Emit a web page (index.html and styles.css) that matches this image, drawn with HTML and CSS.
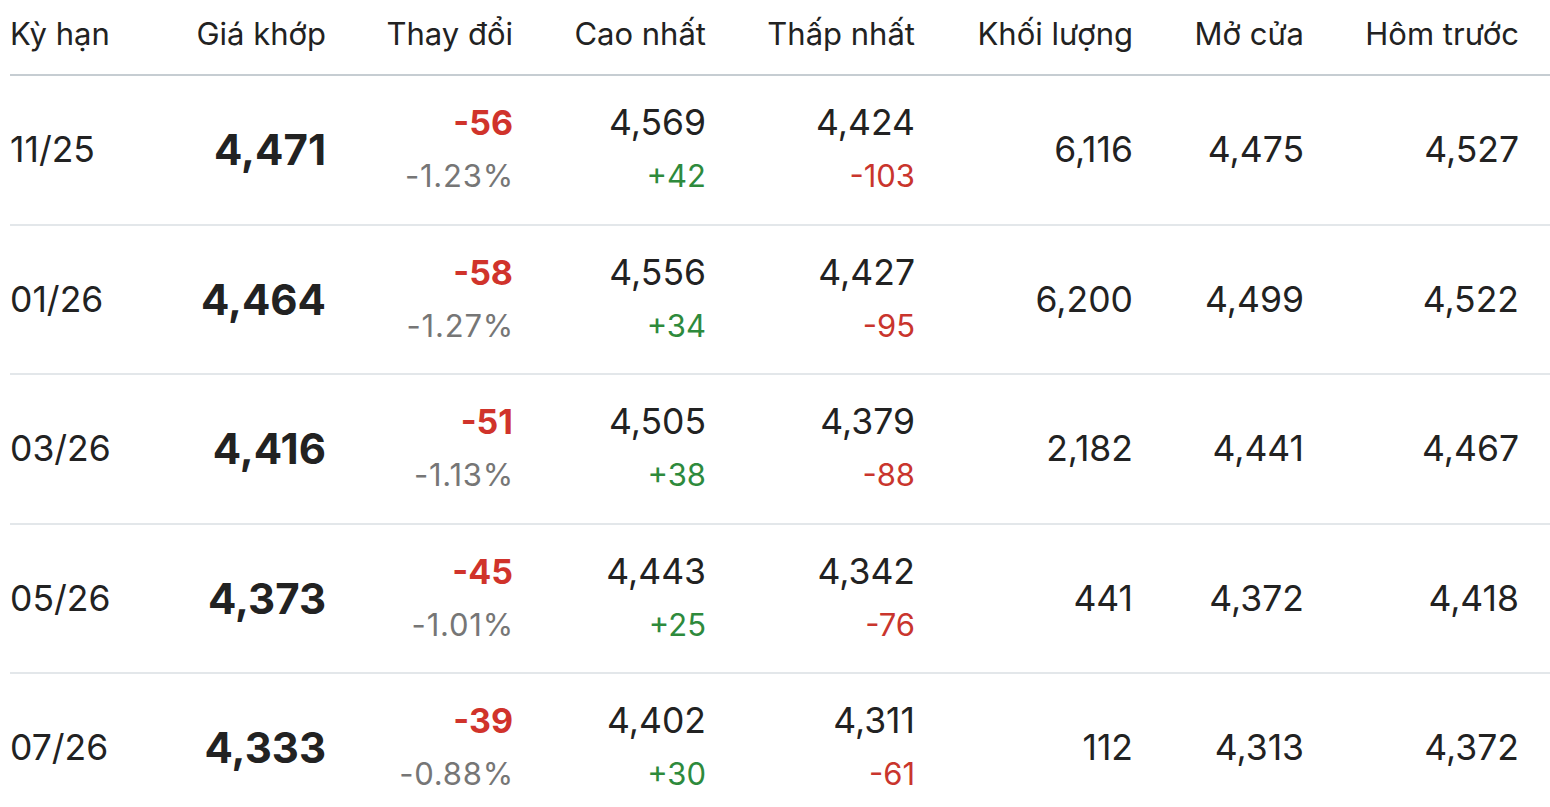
FILE: index.html
```html
<!DOCTYPE html>
<html lang="vi">
<head>
<meta charset="utf-8">
<title>Bảng giá</title>
<link rel="stylesheet" href="styles.css">
</head>
<body>
<div class="table">
  <div class="row head">
    <div class="cell left">Kỳ hạn</div>
    <div class="cell">Giá khớp</div>
    <div class="cell">Thay đổi</div>
    <div class="cell">Cao nhất</div>
    <div class="cell">Thấp nhất</div>
    <div class="cell">Khối lượng</div>
    <div class="cell">Mở cửa</div>
    <div class="cell">Hôm trước</div>
  </div>

  <div class="row">
    <div class="cell left val">11/25</div>
    <div class="cell price">4,471</div>
    <div class="cell stack"><span class="chg down">-56</span><span class="pct">-1.23%</span></div>
    <div class="cell stack"><span class="val">4,569</span><span class="sub up">+42</span></div>
    <div class="cell stack"><span class="val">4,424</span><span class="sub down2">-103</span></div>
    <div class="cell val">6,116</div>
    <div class="cell val">4,475</div>
    <div class="cell val">4,527</div>
  </div>

  <div class="row">
    <div class="cell left val">01/26</div>
    <div class="cell price">4,464</div>
    <div class="cell stack"><span class="chg down">-58</span><span class="pct">-1.27%</span></div>
    <div class="cell stack"><span class="val">4,556</span><span class="sub up">+34</span></div>
    <div class="cell stack"><span class="val">4,427</span><span class="sub down2">-95</span></div>
    <div class="cell val">6,200</div>
    <div class="cell val">4,499</div>
    <div class="cell val">4,522</div>
  </div>

  <div class="row">
    <div class="cell left val">03/26</div>
    <div class="cell price">4,416</div>
    <div class="cell stack"><span class="chg down">-51</span><span class="pct">-1.13%</span></div>
    <div class="cell stack"><span class="val">4,505</span><span class="sub up">+38</span></div>
    <div class="cell stack"><span class="val">4,379</span><span class="sub down2">-88</span></div>
    <div class="cell val">2,182</div>
    <div class="cell val">4,441</div>
    <div class="cell val">4,467</div>
  </div>

  <div class="row">
    <div class="cell left val">05/26</div>
    <div class="cell price">4,373</div>
    <div class="cell stack"><span class="chg down">-45</span><span class="pct">-1.01%</span></div>
    <div class="cell stack"><span class="val">4,443</span><span class="sub up">+25</span></div>
    <div class="cell stack"><span class="val">4,342</span><span class="sub down2">-76</span></div>
    <div class="cell val">441</div>
    <div class="cell val">4,372</div>
    <div class="cell val">4,418</div>
  </div>

  <div class="row">
    <div class="cell left val">07/26</div>
    <div class="cell price">4,333</div>
    <div class="cell stack"><span class="chg down">-39</span><span class="pct">-0.88%</span></div>
    <div class="cell stack"><span class="val">4,402</span><span class="sub up">+30</span></div>
    <div class="cell stack"><span class="val">4,311</span><span class="sub down2">-61</span></div>
    <div class="cell val">112</div>
    <div class="cell val">4,313</div>
    <div class="cell val">4,372</div>
  </div>
</div>
</body>
</html>
```

FILE: styles.css
```css
html {
  overflow: hidden;
  background: #ffffff;
}

body {
  margin: 0;
  font-family: Inter, "Noto Sans", "Liberation Sans", sans-serif;
  color: #222222;
  background: #ffffff;
}

.table {
  margin-left: 10px;
  width: 1540px;
}

.row {
  display: grid;
  grid-template-columns: 130px 186px 187px 193px 209px 218px 171px 215px;
  padding-right: 31px;
  height: 147.5px;
  border-bottom: 2px solid #e3e7ea;
  align-items: center;
}

.row.head {
  height: 74px;
  border-bottom: 2px solid #c6cdd2;
}

.cell {
  text-align: right;
  white-space: nowrap;
}

.cell.left {
  text-align: left;
}

.head .cell {
  font-size: 31px;
  font-weight: 400;
  color: #222222;
  padding-bottom: 8px;
}

.val {
  font-size: 35.5px;
  font-weight: 400;
  color: #222222;
}

.price {
  font-size: 42px;
  font-weight: 700;
  color: #222222;
}

.stack {
  display: flex;
  flex-direction: column;
  align-items: flex-end;
  gap: 13px;
}

.stack .val {
  line-height: 40px;
}

.chg {
  font-size: 34px;
  font-weight: 700;
  line-height: 40px;
}

.pct {
  font-size: 31px;
  letter-spacing: 0.8px;
  color: #767676;
  line-height: 40px;
  margin-right: -1px;
}

.sub {
  font-size: 31px;
  line-height: 40px;
}

.down {
  color: #d0332b;
}

.down2 {
  color: #c9352d;
}

.up {
  color: #2e8a3c;
}
```
